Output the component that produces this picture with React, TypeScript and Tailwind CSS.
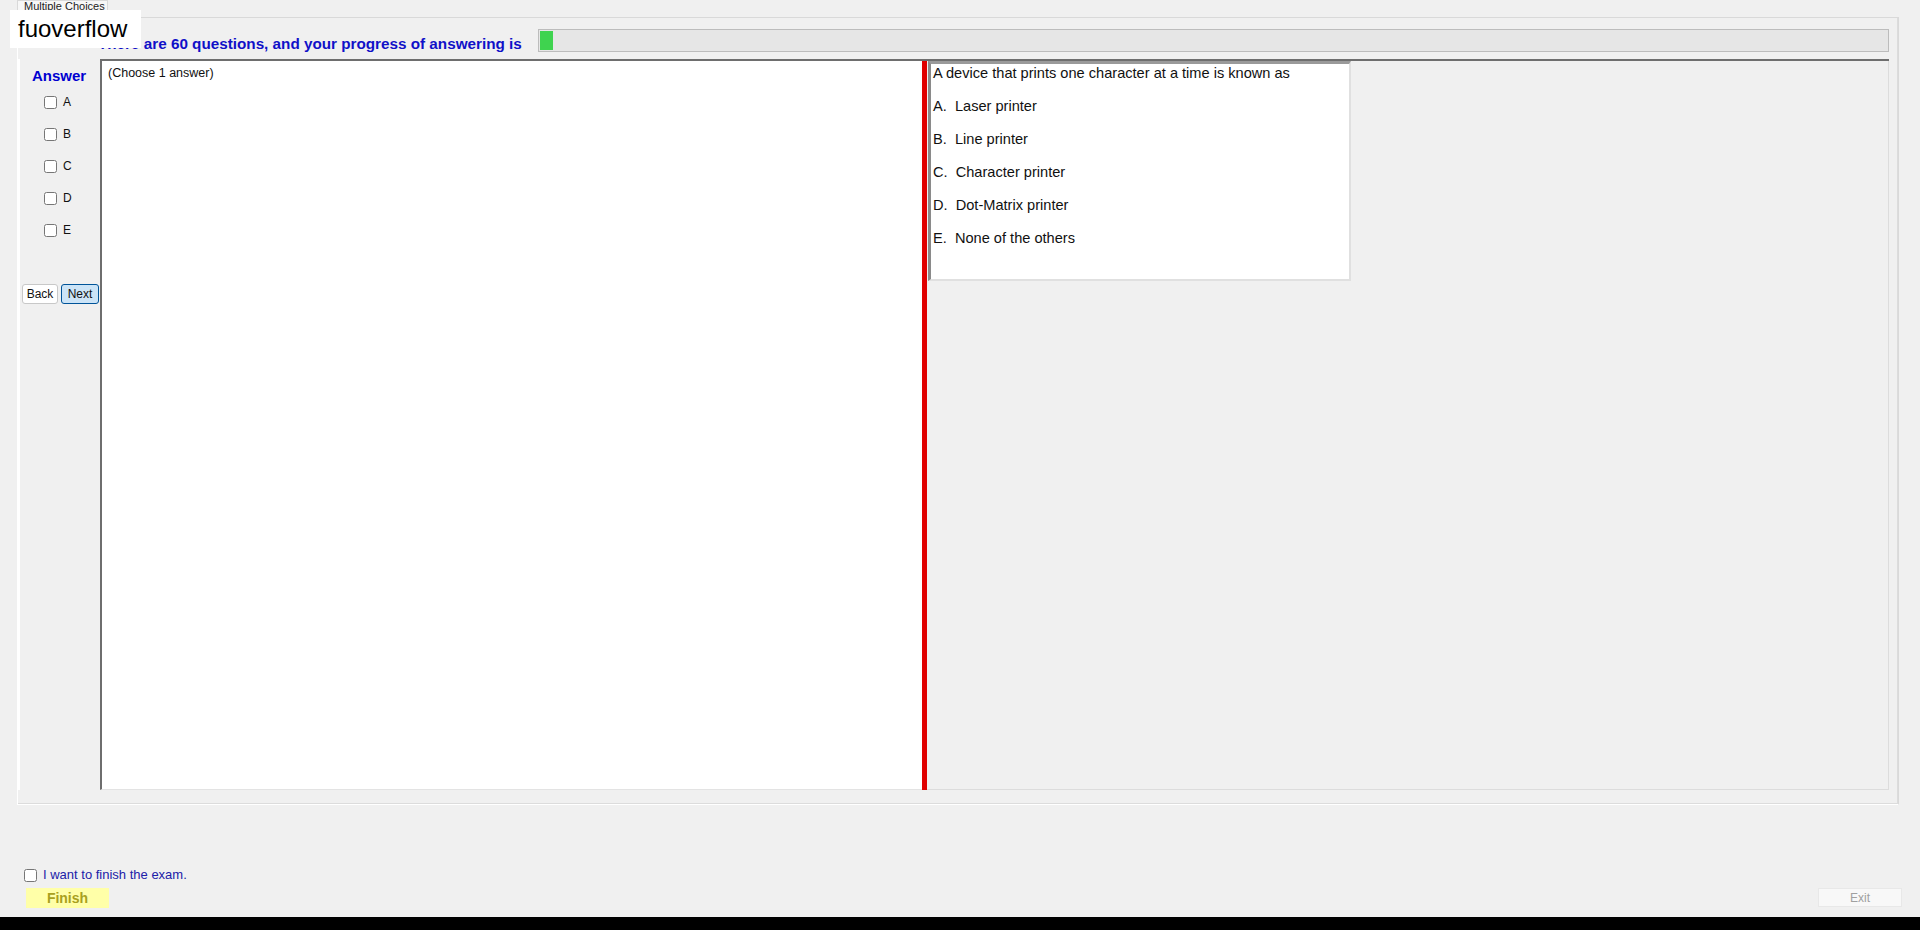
import { useState } from 'react';

const FONT = { fontFamily: '"Liberation Sans", Arial, sans-serif' };

export default function App() {
  const [picked, setPicked] = useState<string[]>([]);
  const [finish, setFinish] = useState(false);
  const letters = ['A', 'B', 'C', 'D', 'E'];
  const options = ['Laser printer', 'Line printer', 'Character printer', 'Dot-Matrix printer', 'None of the others'];

  const toggle = (l: string) =>
    setPicked(p => (p.includes(l) ? p.filter(x => x !== l) : [...p, l]));

  return (
    <div className="relative flex flex-col h-[930px] w-[1920px] bg-[#f0f0f0] overflow-hidden text-black" style={FONT}>
      {/* tab strip */}
      <div className="flex h-[17px] pl-[17px]">
        <div className="w-[91px] h-[17px] bg-[#f7f7f7] border border-b-0 border-[#d9d9d9] text-[11px] leading-[11px] text-[#222] pl-[6px] overflow-hidden">
          Multiple Choices
        </div>
      </div>

      {/* tab page */}
      <div className="ml-[17px] mr-[21px] h-[788px] border border-[#d9d9d9] border-b-white border-l-white shadow-[inset_-1px_-1px_0_#dcdcdc] flex flex-col">
        {/* progress header */}
        <div className="h-[41px] flex pt-[11px] pl-[80px] pr-[9px]">
          <div className="w-[440px] mt-[6px] text-[15.25px] leading-[18px] font-bold text-[#1010c8] whitespace-nowrap">
            There are 60 questions, and your progress of answering is
          </div>
          <div className="flex-1 h-[23px] bg-[#e6e6e6] border border-[#bcbcbc] p-[1px] flex">
            <div className="w-[13px] h-full bg-[#3fd34f]" />
          </div>
        </div>

        <div className="flex-1 flex mb-[14px]">
          {/* answer column */}
          <div className="w-[82px] flex flex-col pt-[8px] border-l-2 border-white">
            <div className="text-[15px] font-bold text-[#0000d0] pl-[12px] leading-[18px]">Answer</div>
            <div className="flex flex-col gap-[14px] pl-[24px] mt-[8px]">
              {letters.map(l => (
                <label key={l} className="flex items-center gap-[6px] h-[18px] text-[12px] text-[#111]">
                  <input
                    type="checkbox"
                    checked={picked.includes(l)}
                    onChange={() => toggle(l)}
                    className="w-[13px] h-[13px] m-0"
                  />
                  {l}
                </label>
              ))}
            </div>
            <div className="flex gap-[3px] pl-[2px] mt-[45px]">
              <button className="w-[36px] h-[20px] bg-white border border-[#c8c8c8] rounded-[3px] text-[12px] text-[#111]">Back</button>
              <button className="w-[38px] h-[20px] bg-[#cce4f7] border border-[#005499] rounded-[3px] text-[12px] text-[#111]">Next</button>
            </div>
          </div>

          {/* content */}
          <div className="flex-1 flex border-t-2 border-[#6e6e6e] mr-[9px]">
            <div className="w-[822px] bg-white border-l-2 border-[#6e6e6e] border-b border-b-[#e3e3e3] pl-[6px] pt-[3px] text-[12.5px] text-[#111]">
              (Choose 1 answer)
            </div>
            <div className="w-[5px] bg-[#e00000]" />
            <div className="flex-1 border-r border-b border-[#dcdcdc] pl-[1px]">
              <div className="w-[423px] h-[220px] bg-white border-l-[3px] border-t-[3px] border-l-[#8a8a8a] border-t-[#9a9a9a] border-r-2 border-b-2 border-r-[#e0e0e0] border-b-[#e0e0e0] pl-[2px] text-[14.6px] text-[#111]">
                <div className="h-[33px] leading-[18px]">A device that prints one character at a time is known as</div>
                {options.map((o, i) => (
                  <div key={o} className="h-[33px] leading-[18px] whitespace-pre">
                    {letters[i]}.{'  '}{o}
                  </div>
                ))}
              </div>
            </div>
          </div>
        </div>
      </div>

      {/* bottom */}
      <div className="flex-1 flex items-end justify-between pl-[24px] pr-[18px] pb-[9px]">
        <div className="flex flex-col">
          <label className="flex items-center gap-[6px] h-[16px] text-[13px] text-[#2020a8]">
            <input
              type="checkbox"
              checked={finish}
              onChange={() => setFinish(!finish)}
              className="w-[13px] h-[13px] m-0"
            />
            I want to finish the exam.
          </label>
          <button className="mt-[5px] ml-[2px] w-[83px] h-[20px] bg-[#ffffa8] text-[14px] font-bold text-[#a8a020]">
            Finish
          </button>
        </div>
        <button className="w-[84px] h-[19px] bg-[#f8f8f8] border border-[#e8e8e8] text-[12px] text-[#a0a0a0] mb-[1px]">Exit</button>
      </div>

      <div className="h-[13px] bg-black" />

      {/* watermark label over the header */}
      <div className="absolute left-[10px] top-[10px] w-[131px] h-[38px] bg-white text-[24px] leading-[38px] pl-[8px] text-black">
        fuoverflow
      </div>
    </div>
  );
}
